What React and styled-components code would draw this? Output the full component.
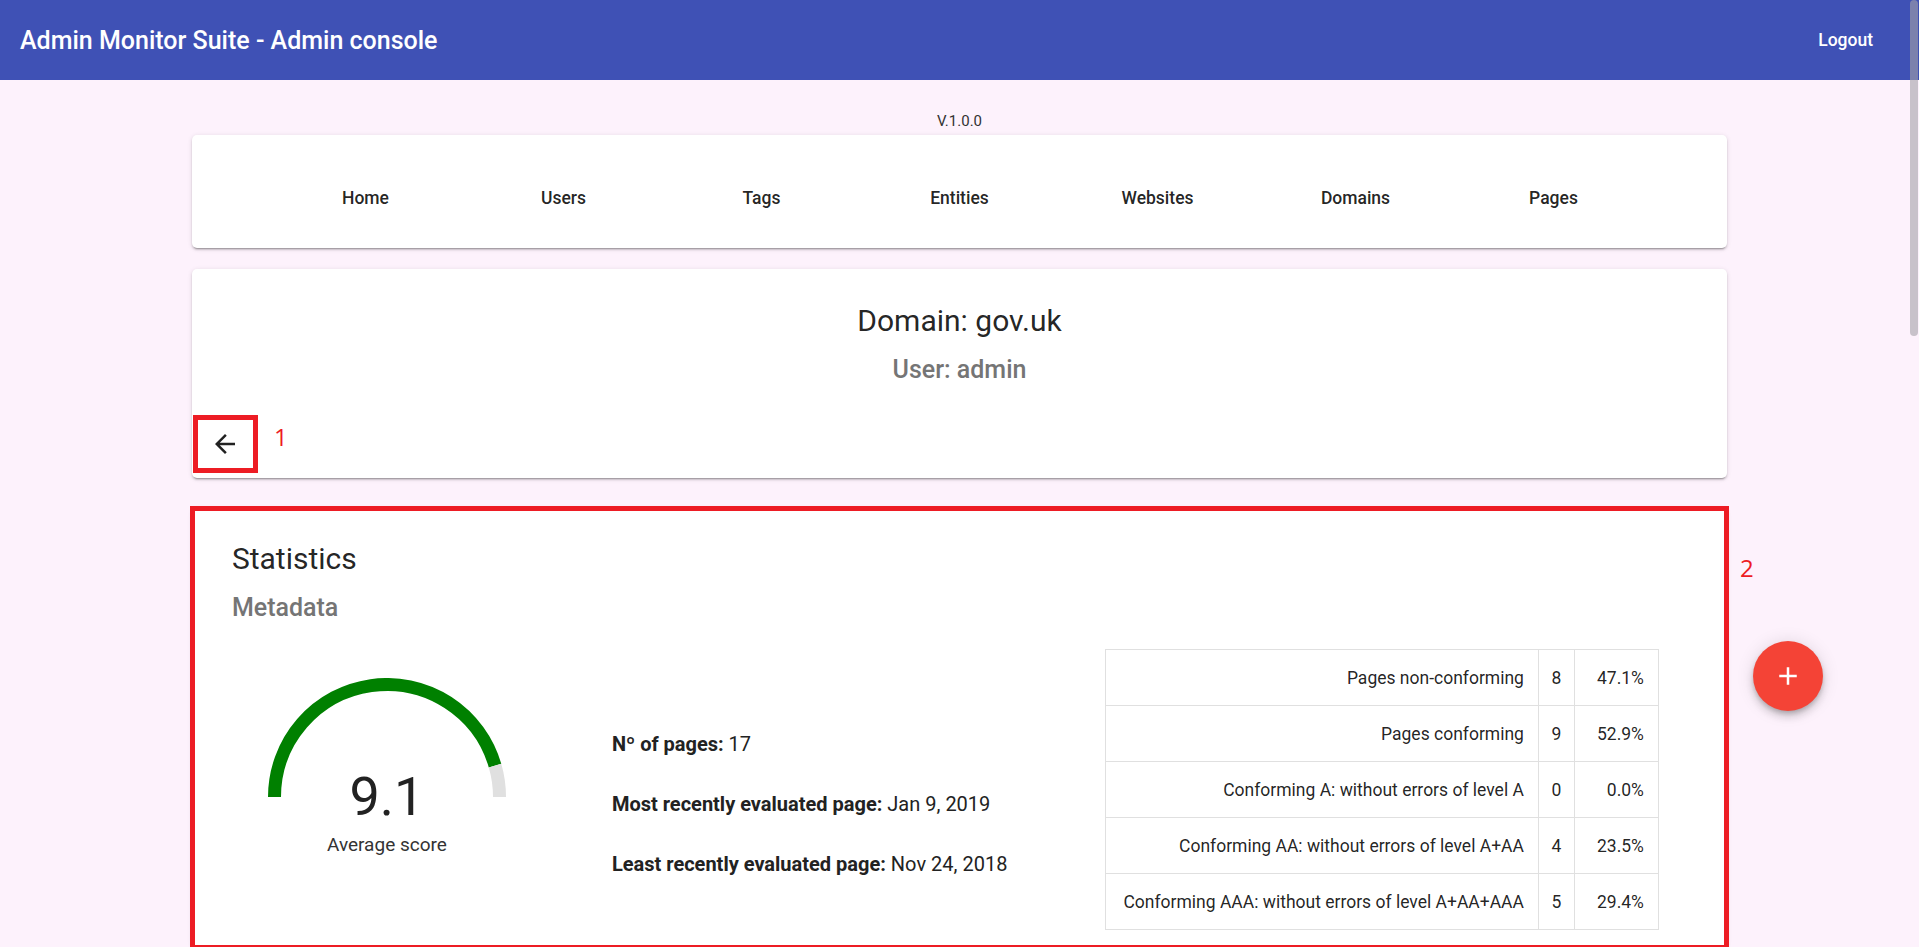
import React from "react";
import styled, { createGlobalStyle } from "styled-components";

const GlobalStyle = createGlobalStyle`
  html, body {
    margin: 0;
    padding: 0;
    overflow: hidden;
    background: #fdf2fc;
  }
  body {
    font-family: Roboto, "Noto Sans", sans-serif;
    color: rgba(0, 0, 0, 0.87);
  }
`;

const Toolbar = styled.header`
  display: flex;
  align-items: center;
  justify-content: space-between;
  height: 80px;
  padding: 0 26px 0 20px;
  background: #3f51b5;
  color: #fff;
`;

const AppTitle = styled.h1`
  margin: 0;
  font-size: 25px;
  font-weight: 500;
`;

const LogoutButton = styled.button`
  height: 45px;
  padding: 0 20px;
  border: none;
  background: transparent;
  color: #fff;
  font-family: Roboto, sans-serif;
  font-size: 17.5px;
  font-weight: 500;
  cursor: pointer;
`;

const Main = styled.main`
  width: 80%;
  margin: 0 auto;
`;

const Version = styled.div`
  margin-top: 32px;
  line-height: 18px;
  font-size: 15px;
  color: #333;
  text-align: center;
`;

const Card = styled.section`
  box-sizing: border-box;
  background: #fff;
  border-radius: 5px;
  box-shadow: 0 3px 1px -2px rgba(0, 0, 0, 0.2), 0 2px 2px 0 rgba(0, 0, 0, 0.14),
    0 1px 5px 0 rgba(0, 0, 0, 0.12);
`;

const NavCard = styled(Card)`
  display: flex;
  justify-content: center;
  align-items: center;
  height: 113px;
  margin-top: 5px;
  padding-top: 12px;
`;

const NavItem = styled.a`
  width: 198px;
  text-align: center;
  font-size: 17.5px;
  font-weight: 500;
  color: rgba(0, 0, 0, 0.87);
  text-decoration: none;
`;

const DomainCard = styled(Card)`
  height: 209px;
  margin-top: 21px;
  padding-top: 34px;
  text-align: center;
`;

const CardTitle = styled.h2`
  margin: 0;
  font-size: 30px;
  font-weight: 400;
  line-height: 36px;
  text-align: ${(p) => (p.left ? "left" : "center")};
`;

const SubTitle = styled.h3`
  margin: 16px 0 0;
  font-size: 25px;
  font-weight: 500;
  line-height: 30px;
  color: #757575;
`;

const BackRow = styled.div`
  display: flex;
  align-items: flex-start;
  margin-top: 30px;
  padding-left: 1px;
`;

const Highlight = styled.div`
  box-sizing: border-box;
  display: flex;
  align-items: center;
  justify-content: center;
  width: 65px;
  height: 58px;
  border: 5px solid #ed1c24;
`;

const IconButton = styled.button`
  display: grid;
  place-items: center;
  width: 50px;
  height: 48px;
  padding: 0;
  border: none;
  background: transparent;
  color: rgba(0, 0, 0, 0.87);
  cursor: pointer;
`;

const Note = styled.span`
  font-family: "Open Sans", sans-serif;
  font-size: 24px;
  line-height: 24px;
  color: #ed1c24;
  margin: 10px 0 0 16px;
`;

const StatsCard = styled(Card)`
  position: relative;
  height: 440px;
  margin-top: 30px;
  padding: 33px 40px 0;

  &::after {
    content: "";
    position: absolute;
    inset: -2px;
    border: 5px solid #ed1c24;
    pointer-events: none;
  }
`;

const CornerNote = styled(Note)`
  position: absolute;
  top: 48px;
  left: calc(100% + 13px);
  margin: 0;
`;

const StatsRow = styled.div`
  display: flex;
  align-items: flex-start;
  margin-top: 26px;
`;

const GaugeCol = styled.div`
  display: flex;
  flex-direction: column;
  align-items: center;
  width: 310px;
  margin-top: 29px;
`;

const GaugeWrap = styled.div`
  position: relative;
  width: 238px;
  height: 119px;
`;

const Score = styled.div`
  position: absolute;
  top: 92px;
  left: 0;
  right: 0;
  font-size: 54px;
  line-height: 54px;
  text-align: center;
  color: #222;
`;

const GaugeLabel = styled.div`
  margin-top: 37px;
  font-size: 19px;
  line-height: 22px;
  color: #333;
`;

const InfoCol = styled.div`
  width: 493px;
  margin: 83px 0 0 70px;
`;

const InfoLine = styled.p`
  margin: 0 0 36px;
  font-size: 20px;
  line-height: 24px;
  color: #222;

  b {
    font-weight: 700;
  }
`;

const Table = styled.table`
  width: 553px;
  border-collapse: collapse;
  table-layout: fixed;
  font-size: 17.5px;
  color: rgba(0, 0, 0, 0.87);
`;

const Cell = styled.td`
  height: 55px;
  padding: 0 ${(p) => (p.center ? "0" : "14px")};
  border: 1px solid #e0e0e0;
  text-align: ${(p) => (p.center ? "center" : "right")};
  white-space: nowrap;
`;

const Fab = styled.button`
  position: fixed;
  top: 641px;
  right: 96px;
  display: grid;
  place-items: center;
  width: 70px;
  height: 70px;
  padding: 0;
  border: none;
  border-radius: 50%;
  background: #f44336;
  box-shadow: 0 3px 5px -1px rgba(0, 0, 0, 0.2), 0 6px 10px 0 rgba(0, 0, 0, 0.14),
    0 1px 18px 0 rgba(0, 0, 0, 0.12);
  cursor: pointer;
`;

const ScrollThumb = styled.div`
  position: fixed;
  top: 0;
  right: 1px;
  width: 8px;
  height: 336px;
  border-radius: 4px;
  background: rgba(165, 162, 168, 0.6);
`;

const navItems = ["Home", "Users", "Tags", "Entities", "Websites", "Domains", "Pages"];

const rows = [
  { label: "Pages non-conforming", count: 8, pct: "47.1%" },
  { label: "Pages conforming", count: 9, pct: "52.9%" },
  { label: "Conforming A: without errors of level A", count: 0, pct: "0.0%" },
  { label: "Conforming AA: without errors of level A+AA", count: 4, pct: "23.5%" },
  { label: "Conforming AAA: without errors of level A+AA+AAA", count: 5, pct: "29.4%" },
];

const Gauge = ({ value }) => {
  const r = 112.5;
  const c = 119;
  const angle = Math.PI * (1 - value / 10);
  const ex = c + r * Math.cos(angle);
  const ey = c - r * Math.sin(angle);
  return (
    <svg width="238" height="119" viewBox="0 0 238 119">
      <path
        d={`M ${c - r} ${c} A ${r} ${r} 0 0 1 ${ex} ${ey}`}
        fill="none"
        stroke="#008000"
        strokeWidth="13"
      />
      <path
        d={`M ${ex} ${ey} A ${r} ${r} 0 0 1 ${c + r} ${c}`}
        fill="none"
        stroke="#e0e0e0"
        strokeWidth="13"
      />
    </svg>
  );
};

const App = () => {
  return (
    <>
      <GlobalStyle />
      <Toolbar>
        <AppTitle>Admin Monitor Suite - Admin console</AppTitle>
        <LogoutButton>Logout</LogoutButton>
      </Toolbar>
      <Main>
        <Version>V.1.0.0</Version>
        <NavCard>
          {navItems.map((item) => (
            <NavItem key={item} href="#">
              {item}
            </NavItem>
          ))}
        </NavCard>
        <DomainCard>
          <CardTitle>Domain: gov.uk</CardTitle>
          <SubTitle>User: admin</SubTitle>
          <BackRow>
            <Highlight>
              <IconButton aria-label="Back">
                <svg width="30" height="30" viewBox="0 0 24 24" fill="currentColor">
                  <path d="M20 11H7.83l5.59-5.59L12 4l-8 8 8 8 1.41-1.41L7.83 13H20v-2z" />
                </svg>
              </IconButton>
            </Highlight>
            <Note>1</Note>
          </BackRow>
        </DomainCard>
        <StatsCard>
          <CornerNote>2</CornerNote>
          <CardTitle left>Statistics</CardTitle>
          <SubTitle>Metadata</SubTitle>
          <StatsRow>
            <GaugeCol>
              <GaugeWrap>
                <Gauge value={9.1} />
                <Score>9.1</Score>
              </GaugeWrap>
              <GaugeLabel>Average score</GaugeLabel>
            </GaugeCol>
            <InfoCol>
              <InfoLine>
                <b>Nº of pages:</b> 17
              </InfoLine>
              <InfoLine>
                <b>Most recently evaluated page:</b> Jan 9, 2019
              </InfoLine>
              <InfoLine>
                <b>Least recently evaluated page:</b> Nov 24, 2018
              </InfoLine>
            </InfoCol>
            <Table>
              <colgroup>
                <col style={{ width: 433 }} />
                <col style={{ width: 36 }} />
                <col style={{ width: 84 }} />
              </colgroup>
              <tbody>
                {rows.map((row) => (
                  <tr key={row.label}>
                    <Cell>{row.label}</Cell>
                    <Cell center>{row.count}</Cell>
                    <Cell>{row.pct}</Cell>
                  </tr>
                ))}
              </tbody>
            </Table>
          </StatsRow>
        </StatsCard>
      </Main>
      <Fab aria-label="Add">
        <svg width="30" height="30" viewBox="0 0 24 24" fill="#fff">
          <path d="M19 13h-6v6h-2v-6H5v-2h6V5h2v6h6v2z" />
        </svg>
      </Fab>
      <ScrollThumb />
    </>
  );
};

export default App;
